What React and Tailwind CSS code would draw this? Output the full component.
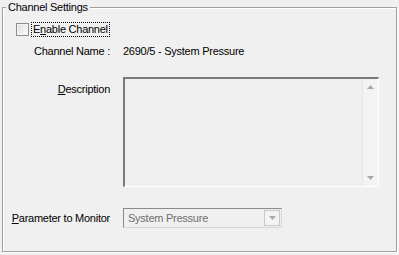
export default function App() {
  return (
    <div className="w-[399px] h-[255px] bg-[#f0f0f0] pt-[7px] pl-[2px] text-[11px] tracking-[-0.25px] text-black overflow-hidden" style={{ fontFamily: '"Liberation Sans", Arial, sans-serif' }}>
      <div className="relative w-[395px] h-[245px] border border-[#a0a0a0] shadow-[inset_1px_1px_0_#ffffff,1px_1px_0_#ffffff]">
        <span className="absolute left-[3px] -top-[8px] px-[2px] bg-[#f0f0f0] leading-[14px]">Channel Settings</span>

        {/* enable checkbox */}
        <div className="flex items-center h-[15px] mt-[14px] ml-[13px]">
          <span className="w-[13px] h-[13px] border border-[#8e8f8f] bg-gradient-to-br from-[#dcdcdc] to-[#ffffff] shadow-[inset_0_0_0_1px_#f4f4f4]" />
          <span className="ml-[3px] px-[1px] leading-[13px] outline outline-1 outline-dotted outline-black">
            E<span className="underline underline-offset-1">n</span>able Channel
          </span>
        </div>

        {/* channel name */}
        <div className="grid grid-cols-[107px_1fr] gap-x-[13px] mt-[7px] leading-[14px]">
          <span className="text-right">Channel Name :</span>
          <span>2690/5 - System Pressure</span>
        </div>

        {/* description */}
        <div className="grid grid-cols-[107px_1fr] gap-x-[13px] mt-[19px]">
          <span className="text-right pt-[5px] leading-[14px]">
            <span className="underline underline-offset-1">D</span>escription
          </span>
          <div className="w-[256px] h-[110px] flex border-l-2 border-t-2 border-l-[#7a7a7a] border-t-[#7a7a7a] border-r border-b border-r-white border-b-white">
            <div className="flex-1" />
            <div className="w-[16px] flex flex-col items-center justify-between bg-[#f3f3f3] border-l border-[#e6e6e6] py-[6px]">
              <svg width="7" height="4" viewBox="0 0 7 4"><path d="M0 4 L3.5 0 L7 4 Z" fill="#a8a8a8" /></svg>
              <svg width="7" height="4" viewBox="0 0 7 4"><path d="M0 0 L3.5 4 L7 0 Z" fill="#a8a8a8" /></svg>
            </div>
          </div>
        </div>

        {/* parameter */}
        <div className="grid grid-cols-[107px_1fr] gap-x-[13px] items-center mt-[21px]">
          <span className="text-right leading-[14px]">
            <span className="underline underline-offset-1">P</span>arameter to Monitor
          </span>
          <div className="w-[159px] h-[20px] flex items-center border border-[#8a8a8a] border-r-[#d8d8d8] border-b-[#d8d8d8] pl-[4px] pr-[1px] text-[#6d6d6d]">
            <span className="flex-1 leading-[14px]">System Pressure</span>
            <span className="w-[16px] h-[16px] flex items-center justify-center border border-[#c8c8c8] bg-[#f4f4f4]">
              <svg width="7" height="4" viewBox="0 0 7 4"><path d="M0 0 L3.5 4 L7 0 Z" fill="#a8a8a8" /></svg>
            </span>
          </div>
        </div>
      </div>
    </div>
  )
}
